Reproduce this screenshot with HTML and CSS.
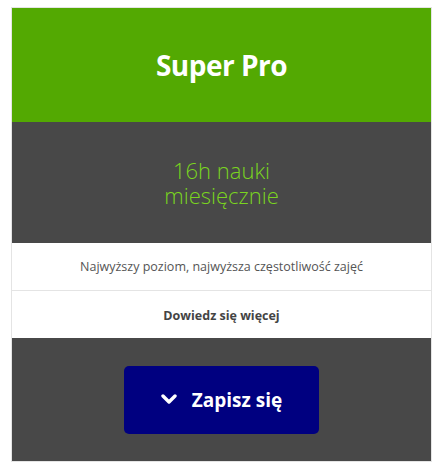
FILE: index.html
```html
<!DOCTYPE html>
<html lang="pl">
<head>
    <meta charset="UTF-8">
    <meta name="viewport" content="width=device-width, initial-scale=1.0">
    <title>Super Pro</title>
    <link rel="stylesheet" href="styles.css">
</head>
<body>
<div class="plan">
    <div class="plan-header">
        <h3>Super Pro</h3>
    </div>
    <div class="plan-price">
        <p>16h nauki<br>miesięcznie</p>
    </div>
    <div class="plan-desc">Najwyższy poziom, najwyższa częstotliwość zajęć</div>
    <div class="plan-more"><a href="#">Dowiedz się więcej</a></div>
    <div class="plan-footer">
        <button type="button" class="signup">
            <svg width="16" height="11" viewBox="0 0 16 11" aria-hidden="true">
                <path d="M2 2 L8 8 L14 2" fill="none" stroke="#fff" stroke-width="3.4" stroke-linecap="round" stroke-linejoin="round"/>
            </svg>
            Zapisz się
        </button>
    </div>
</div>
</body>
</html>
```

FILE: styles.css
```css
body {
    font-family: "Open Sans", Arial, sans-serif;
    margin: 0;
    padding: 7px 11px 0;
    background-color: #fff;
}
.plan {
    border: 1px solid #e4e4e4;
    text-align: center;
}
.plan-header {
    background-color: #53a902;
    height: 114px;
    display: flex;
    align-items: center;
    justify-content: center;
}
.plan-header h3 {
    margin: 0;
    color: #fff;
    font-size: 28px;
    font-weight: 700;
    letter-spacing: -0.5px;
}
.plan-price {
    background-color: #484848;
    height: 121px;
    display: flex;
    align-items: center;
    justify-content: center;
}
.plan-price p {
    margin: 0;
    color: #7ad51f;
    font-size: 22px;
    font-weight: 300;
    line-height: 25px;
}
.plan-desc {
    height: 47px;
    line-height: 47px;
    font-size: 12.5px;
    color: #555;
    border-bottom: 1px solid #e4e4e4;
}
.plan-more {
    height: 47px;
    line-height: 47px;
}
.plan-more a {
    font-size: 12.5px;
    font-weight: 700;
    color: #444;
    text-decoration: none;
}
.plan-footer {
    background-color: #484848;
    height: 123px;
    display: flex;
    align-items: center;
    justify-content: center;
}
.signup {
    width: 195px;
    height: 68px;
    background-color: #000080;
    color: #fff;
    border: none;
    border-radius: 5px;
    font-family: "Open Sans", Arial, sans-serif;
    font-size: 19px;
    font-weight: 700;
    display: flex;
    align-items: center;
    justify-content: center;
    gap: 15px;
    cursor: pointer;
}
```
